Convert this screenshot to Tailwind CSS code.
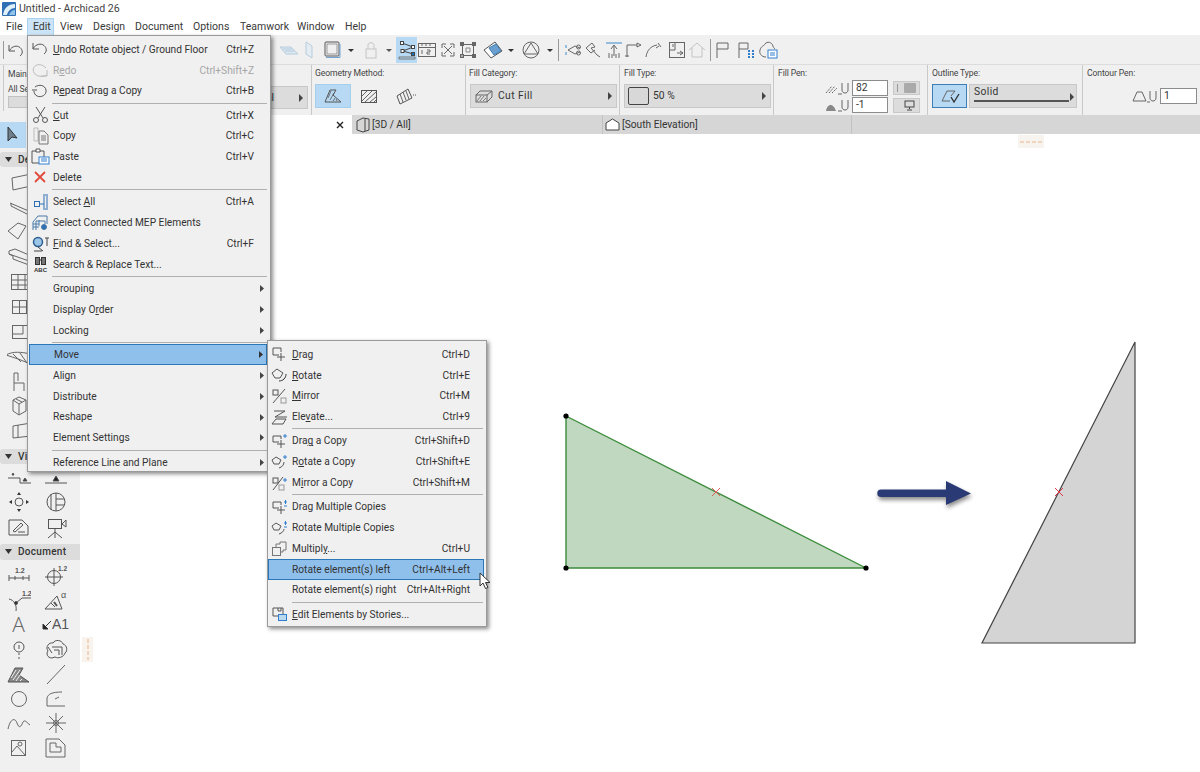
<!DOCTYPE html>
<html lang="en">
<head>
<meta charset="utf-8">
<title>Untitled - Archicad 26</title>
<script src="https://cdn.jsdelivr.net/npm/@tailwindcss/browser@4"></script>
</head>
<body class="bg-white">
<div class="relative w-[1200px] h-[772px] overflow-hidden bg-white flex flex-col font-['Roboto',sans-serif] text-[#3a3a3a] text-[10.300px] whitespace-nowrap">

  <!-- Title bar -->
  <div class="h-[18px] flex items-center shrink-0 pl-[2px]">
    <svg width="14" height="14" viewBox="0 0 14 14"><rect width="14" height="14" rx="1" fill="#2f6fb5"/><path d="M1 13C2 6 6 2 13 2V6C9 6 6 9 5 13Z" fill="#dff0fb"/><path d="M7 13C8 10 10 8 13 8V13Z" fill="#8fc3ea"/></svg>
    <span class="ml-[3px] text-[10.600px] text-[#444]">Untitled - Archicad 26</span>
  </div>

  <!-- Menu bar -->
  <div class="h-[17px] flex items-stretch shrink-0 text-[10.500px] leading-[17px]">
    <span class="w-[27px] pl-[6px]">File</span>
    <span class="w-[27px] pl-[5px] bg-[#cce4f7] border border-[#a8d2f0] border-b-0 leading-[16px]">Edit</span>
    <span class="pl-[6px] w-[33px]">View</span>
    <span class="pl-[6px] w-[42px]">Design</span>
    <span class="pl-[6px] w-[58px]">Document</span>
    <span class="pl-[6px] w-[47px]">Options</span>
    <span class="pl-[6px] w-[57px]">Teamwork</span>
    <span class="pl-[6px] w-[48px]">Window</span>
    <span class="pl-[6px]">Help</span>
  </div>

  <!-- Standard toolbar -->
  <div class="h-[29px] bg-[#f0f0f0] shrink-0 flex items-center">
    <span class="w-px h-[18px] bg-[#999] ml-[3px]"></span>
    <svg class="ml-[3px]" width="18" height="18" viewBox="0 0 18 18" fill="none" stroke="#555"><path d="M2 4V10H8M2.5 9.5C5 5 10 4 13 6.5C16 9 16 13 13 15"/></svg>
    <div class="w-[254px]"></div>
    <svg width="20" height="20" viewBox="0 0 20 20" fill="#dbe7f1" stroke="#b7ccdd"><path d="M1 7H12L19 14H7Z"/><path d="M4 9H13M6 11H15" /></svg>
    <svg width="20" height="20" viewBox="0 0 20 20" fill="#e4edf4" stroke="#b7ccdd"><path d="M7 2L13 6V18L7 14Z"/></svg>
    <svg class="ml-[2px]" width="22" height="22" viewBox="0 0 22 22" fill="none" stroke="#555"><rect x="4" y="3" width="14" height="14" rx="1"/><rect x="6" y="5" width="10" height="10" stroke="#999"/><path d="M5 18.500H19V5" stroke="#6fa6d6"/></svg>
    <svg class="ml-[2px]" width="12" height="12" viewBox="0 0 12 12"><path d="M3 5H9L6 8Z" fill="#333"/></svg>
    <svg class="ml-[4px]" width="20" height="20" viewBox="0 0 20 20" fill="none" stroke="#c4c4c4"><rect x="5" y="9" width="10" height="9"/><path d="M7 9V5C7 2 13 2 13 5V9"/></svg>
    <svg class="ml-[2px]" width="12" height="12" viewBox="0 0 12 12"><path d="M3 5H9L6 8Z" fill="#555"/></svg>
    <div class="ml-px w-[21px] h-[26px] bg-[#b7d9f4] flex items-center justify-center">
      <svg width="20" height="22" viewBox="0 0 20 22" fill="none" stroke="#444"><path d="M5 4L16 8L6 12L16 15"/><rect x="3.500" y="2.500" width="3" height="3" fill="#fff"/><rect x="14.500" y="6.500" width="3" height="3" fill="#fff"/><rect x="4" y="10.500" width="3" height="3" fill="#fff"/><rect x="14.500" y="13.500" width="3" height="3" fill="#1b74c9"/><path d="M2 18H18V20H2Z" stroke="#777"/></svg>
    </div>
    <svg width="20" height="20" viewBox="0 0 20 20" fill="none" stroke="#666"><rect x="1.500" y="3.500" width="17" height="13"/><path d="M1 7.500H18M5 3V6M9 3V6M13 3V6"/><path d="M5 10V14M10 10H13V12H10V14H13"/></svg>
    <svg class="ml-px" width="20" height="20" viewBox="0 0 20 20" fill="none" stroke="#666"><path d="M6 6L14 14M14 6L6 14M4 4H8M4 4V8M16 4H12M16 4V8M4 16H8M4 16V12M16 16H12M16 16V12"/></svg>
    <svg width="20" height="22" viewBox="0 0 20 22" fill="none" stroke="#666"><rect x="4.500" y="5.500" width="11" height="11"/><rect x="2.500" y="3.500" width="3" height="3" fill="#666"/><rect x="14.500" y="3.500" width="3" height="3" fill="#666"/><rect x="2.500" y="15.500" width="3" height="3" fill="#aaa"/><rect x="14.500" y="15.500" width="3" height="3" fill="#666"/><path d="M8 9H12V13H8Z" stroke="#888"/></svg>
    <svg class="ml-[4px]" width="22" height="22" viewBox="0 0 22 22" fill="none" stroke="#555"><path d="M2 11L13 3L20 12L9 19Z" fill="#fff"/><path d="M7 9L14 5L19 12L12 16Z" fill="#6b9fd0" stroke="#3f7cb5"/></svg>
    <svg class="ml-px" width="12" height="12" viewBox="0 0 12 12"><path d="M3 5H9L6 8Z" fill="#333"/></svg>
    <svg class="ml-[4px]" width="20" height="20" viewBox="0 0 20 20" fill="none" stroke="#666"><circle cx="10" cy="10" r="8"/><path d="M10 3L17 14H3Z"/></svg>
    <svg class="ml-[3px]" width="12" height="12" viewBox="0 0 12 12"><path d="M3 5H9L6 8Z" fill="#333"/></svg>
    <span class="ml-[2px] w-px h-[22px] bg-[#999]"></span>
    <svg class="ml-[4px]" width="20" height="20" viewBox="0 0 20 20" fill="none" stroke="#666"><path d="M3 5V8M3 12V15" stroke="#3d88c9"/><path d="M5 10L12 6L17 8M5 10L12 14L17 12"/><circle cx="15.500" cy="7" r="2"/><circle cx="15.500" cy="13" r="2"/></svg>
    <svg width="20" height="20" viewBox="0 0 20 20" fill="none" stroke="#666"><path d="M3 8L9 3L12 7L8 8L14 15L17 17M3 8L8 13L12 10"/></svg>
    <svg class="ml-px" width="20" height="20" viewBox="0 0 20 20" fill="none" stroke="#666"><path d="M2 3H18" stroke="#3d88c9"/><path d="M10 16V6M7 9L10 5L13 9M5 13V18M8 14V18M12 14V18M15 13V18"/></svg>
    <svg class="-ml-px" width="20" height="20" viewBox="0 0 20 20" fill="none" stroke="#666"><path d="M4 17V5H14M14 3V7L18 5Z"/><path d="M2 16H6" /></svg>
    <svg width="20" height="20" viewBox="0 0 20 20" fill="none" stroke="#666"><path d="M3 17C4 10 8 6 14 5M15 3L18 7M13 8L16 6"/></svg>
    <svg class="ml-[4px]" width="20" height="20" viewBox="0 0 20 20" fill="none" stroke="#666"><rect x="2.500" y="2.500" width="15" height="15"/><path d="M2 10H8V3M6 7L6 4M10 13H16M13 11L16 13L13 15"/></svg>
    <svg width="20" height="20" viewBox="0 0 20 20" fill="none" stroke="#c4c4c4"><path d="M2 10L10 3L18 10M5 8V17H15V8"/></svg>
    <span class="ml-[3px] w-px h-[22px] bg-[#999]"></span>
    <svg class="ml-[2px]" width="20" height="20" viewBox="0 0 20 20" fill="none" stroke="#666"><path d="M4 18V3H15V9H4"/></svg>
    <svg class="ml-[3px]" width="20" height="20" viewBox="0 0 20 20" fill="none" stroke="#666"><path d="M3 18V3H12V9H3"/><path d="M12 11H14M16 11H18M12 14H14M16 14H18M12 17H14M16 17H18" stroke="#2f7fd0" stroke-width="2"/></svg>
    <svg class="ml-[2px]" width="20" height="20" viewBox="0 0 20 20" fill="none" stroke="#666"><path d="M8 17C3 17 1 13 2 10C3 6 6 6 7 4C9 1 14 2 15 6C15 7 16 8 17 9"/><rect x="10" y="10" width="9" height="8" fill="#fff" stroke="#2f7fd0"/><path d="M12 13H17M12 15H17" stroke="#2f7fd0"/></svg>
  </div>

  <!-- Info box -->
  <div class="h-[51px] bg-[#f0f0f0] border-t border-[#dcdcdc] shrink-0 flex text-[8.600px] tracking-[-0.1px] text-[#444]">
    <div class="w-[312px] shrink-0 border-r border-[#c9c9c9] flex">
      <div class="w-[4px] border-r border-[#c9c9c9] mb-1"></div>
      <div class="w-[60px] pl-[4px] pt-[2px]">
        <div class="leading-[12px] mt-[1px]">Main:</div>
        <div class="leading-[12px] mt-[3px]">All Sel</div>
        <div class="w-[22px] h-[12px] mt-[1px] bg-[#dcdcdc] border border-[#c2c2c2]"></div>
      </div>
      <div class="flex-1 flex items-end pb-[6px] pr-[3px]">
        <div class="w-full h-[23px] bg-[#dcdcdc] border border-[#c8c8c8] flex items-center justify-end pr-[3px] gap-[24px] text-[10.300px] tracking-normal text-[#333]">
          <span>al</span>
          <svg width="6" height="8" viewBox="0 0 6 8"><path d="M1 0L5 4L1 8Z" fill="#444"/></svg>
        </div>
      </div>
    </div>

    <div class="w-[154px] shrink-0 border-r border-[#c9c9c9] pl-[3px] pt-[2px]">
      <div class="leading-[12px]">Geometry Method:</div>
      <div class="flex items-center mt-[5px]">
        <div class="w-[36px] h-[24px] bg-[#b7d9f4] border border-[#a5cdec] flex items-center justify-center">
          <svg width="18" height="14" viewBox="0 0 18 14" fill="none" stroke="#555"><path d="M1 13L6 1H12L9 6L17 13Z"/><path d="M4 9L7 2M6 11L10 4M9 12L11 9M13 12L12 10" stroke-width=".8"/></svg>
        </div>
        <svg class="ml-[10px]" width="16" height="13" viewBox="0 0 16 13" fill="none" stroke="#555"><rect x=".5" y=".5" width="15" height="12"/><path d="M1 6L6 1M1 11L11 1M4 12L15 2M9 12L15 7M13 12L15 10" stroke-width=".9"/></svg>
        <svg class="ml-[18px]" width="22" height="18" viewBox="0 0 22 18" fill="none" stroke="#555"><path d="M2 9L13 2L17 11L5 17Z"/><path d="M5 7L8 15M8 5L11 13M11 4L14 12" stroke-width=".9"/><path d="M18 8H21" stroke-dasharray="1 1"/></svg>
      </div>
    </div>

    <div class="w-[154px] shrink-0 border-r border-[#c9c9c9] pl-[3px] pt-[2px]">
      <div class="leading-[12px]">Fill Category:</div>
      <div class="ml-[1px] mt-[5px] w-[147px] h-[24px] bg-[#dcdcdc] border border-[#c8c8c8] flex items-center pl-[4px] pr-[3px] text-[10.300px] tracking-[0.4px] text-[#333]">
        <svg width="18" height="14" viewBox="0 0 18 14" fill="none" stroke="#666"><rect x="1" y="6" width="11" height="7"/><path d="M1 6L5 2H17L12 6M17 2V8L12 13"/><path d="M2 12L6 7M5 12L9 7M8 12L11 9" stroke-width=".8"/></svg>
        <span class="ml-[5px] flex-1">Cut Fill</span>
        <svg width="6" height="8" viewBox="0 0 6 8"><path d="M1 0L5 4L1 8Z" fill="#444"/></svg>
      </div>
    </div>

    <div class="w-[154px] shrink-0 border-r border-[#c9c9c9] pl-[4px] pt-[2px]">
      <div class="leading-[12px]">Fill Type:</div>
      <div class="mt-[5px] w-[147px] h-[24px] bg-[#dcdcdc] border border-[#c8c8c8] flex items-center pl-[3px] pr-[3px] text-[10.300px] tracking-normal text-[#333]">
        <span class="w-[21px] h-[18px] bg-[#d8d8d8] border border-[#444] rounded-[2px]"></span>
        <span class="ml-[4px] flex-1">50 %</span>
        <svg width="6" height="8" viewBox="0 0 6 8"><path d="M1 0L5 4L1 8Z" fill="#444"/></svg>
      </div>
    </div>

    <div class="w-[154px] shrink-0 border-r border-[#c9c9c9] pl-[4px] pt-[2px] relative">
      <div class="leading-[12px]">Fill Pen:</div>
      <div class="absolute right-[7px] top-[15px] flex flex-col gap-px tracking-normal text-[10.300px] text-[#333]">
        <div class="flex items-center">
          <svg width="24" height="16" viewBox="0 0 24 16" fill="none" stroke="#666"><path d="M1 13L7 6M4 13L10 6M7 13L12 8" stroke-dasharray="2 1"/><path d="M17 3V10C17 14 23 14 23 10V3M13 14H17"/></svg>
          <div class="ml-[3px] w-[36px] h-[16px] bg-white border border-[#8c8c8c] leading-[14px] pl-[3px]">82</div>
          <div class="ml-[5px] w-[27px] h-[14px] bg-[#dcdcdc] border border-[#c8c8c8] flex items-center px-[3px] justify-between"><span class="w-px h-[8px] bg-[#999]"></span><span class="w-[12px] h-[10px] bg-[#aaa] rounded-[1px]"></span></div>
        </div>
        <div class="flex items-center">
          <svg width="24" height="16" viewBox="0 0 24 16" fill="none" stroke="#666"><path d="M1 14C2 7 8 5 11 14Z" fill="#888" stroke="none"/><path d="M17 3V10C17 14 23 14 23 10V3M13 14H17"/></svg>
          <div class="ml-[3px] w-[36px] h-[16px] bg-white border border-[#8c8c8c] leading-[14px] pl-[3px]">-1</div>
          <div class="ml-[5px] w-[27px] h-[15px] bg-[#dcdcdc] border border-[#c8c8c8] flex items-center justify-end pr-[4px]"><svg width="11" height="11" viewBox="0 0 11 11" fill="none" stroke="#444"><rect x="1" y="1" width="9" height="6"/><path d="M5.500 7V9M3 10H8"/></svg></div>
        </div>
      </div>
    </div>

    <div class="w-[155px] shrink-0 border-r border-[#c9c9c9] pl-[4px] pt-[2px]">
      <div class="leading-[12px]">Outline Type:</div>
      <div class="flex mt-[5px]">
        <div class="w-[35px] h-[24px] bg-[#b7d9f4] border border-[#3d7fb5] flex items-center justify-center">
          <svg width="20" height="16" viewBox="0 0 20 16" fill="none" stroke="#666"><path d="M2 13L7 3H15L11 8M2 13H10"/><path d="M11 9L14 14L19 6" stroke="#333" stroke-width="1.400"/></svg>
        </div>
        <div class="ml-[2px] w-[108px] h-[24px] bg-[#dcdcdc] border border-[#c8c8c8] relative pl-[4px] text-[10.300px] tracking-[0.4px] leading-[14px] text-[#333]">
          Solid
          <span class="absolute left-[4px] right-[7px] top-[15px] h-[2px] bg-[#555]"></span>
          <svg class="absolute right-[1px] top-[8px]" width="6" height="8" viewBox="0 0 6 8"><path d="M1 0L5 4L1 8Z" fill="#444"/></svg>
        </div>
      </div>
    </div>

    <div class="flex-1 pl-[4px] pt-[2px] relative">
      <div class="leading-[12px]">Contour Pen:</div>
      <div class="absolute right-[3px] top-[23px] flex items-center tracking-normal text-[10.300px] text-[#333]">
        <svg width="26" height="16" viewBox="0 0 26 16" fill="none" stroke="#666"><path d="M1 13L5 4H10L14 13Z"/><path d="M18 3V10C18 14 24 14 24 10V3M15 14H18"/></svg>
        <div class="ml-[2px] w-[37px] h-[16px] bg-white border border-[#8c8c8c] leading-[14px] pl-[3px]">1</div>
      </div>
    </div>
  </div>

  <!-- Lower area -->
  <div class="flex-1 flex min-h-0">
    <!-- Toolbox -->
    <div class="w-[80px] shrink-0 bg-[#f0f0f0] flex flex-col">
      <div class="mt-[7px] w-[26px] h-[26px] bg-[#b7d9f4] flex items-center justify-center">
        <svg width="16" height="18" viewBox="0 0 16 18"><path d="M3 1V15L7 11L12 12Z" fill="#6f7f8c" stroke="#333"/></svg>
      </div>
      <div class="mt-[4px] h-[15px] bg-[#dcdcdc] rounded-l-[3px] flex items-center pl-[5px] text-[10px] font-medium text-[#333] tracking-[0.3px]">
        <svg width="7" height="5" viewBox="0 0 7 5"><path d="M0 0H7L3.500 5Z" fill="#333"/></svg><span class="ml-[6px]">Design</span>
      </div>
      <div class="grid grid-cols-[37px_37px] auto-rows-[24.900px] mt-[3px]">
        <div class="flex items-center justify-center"><svg width="24" height="24" fill="none" stroke="#666"><path d="M5 8L24 4V16L6 20Z"/></svg></div><div></div>
        <div class="flex items-center justify-center"><svg width="24" height="24" fill="none" stroke="#666"><path d="M3 8L24 17M4 11L4 8M4 11L24 21"/></svg></div><div></div>
        <div class="flex items-center justify-center"><svg width="24" height="24" fill="none" stroke="#666"><path d="M1 11L11 3L19 6L11 19Z"/></svg></div><div></div>
        <div class="flex items-center justify-center"><svg width="24" height="24" fill="none" stroke="#666"><path d="M2 6L8 4L22 10M2 6V9L22 16M6 11V14L22 20M2 9L6 11"/></svg></div><div></div>
        <div class="flex items-center justify-center"><svg width="24" height="24" fill="none" stroke="#666"><rect x="4.500" y="4.500" width="20" height="15"/><path d="M4 10H24M4 15H24M11 4V20M18 4V20"/></svg></div><div></div>
        <div class="flex items-center justify-center"><svg width="24" height="24" fill="none" stroke="#666"><rect x="5.500" y="5.500" width="14" height="13"/><path d="M12.500 5V19M5 12H20"/></svg></div><div></div>
        <div class="flex items-center justify-center"><svg width="24" height="24" fill="none" stroke="#666"><rect x="5.500" y="5.500" width="15" height="13"/><path d="M16 5V14H5"/></svg></div><div></div>
        <div class="flex items-center justify-center"><svg width="24" height="24" fill="none" stroke="#666"><path d="M-1 10C6 6 14 7 24 9L27 14L24 20C16 15 8 13 -1 10ZM6 9L14 17M13 8L20 18"/></svg></div><div></div>
        <div class="flex items-center justify-center"><svg width="24" height="24" fill="none" stroke="#666"><path d="M7 3V13H17V21M7 13V21M7 3H11V11M11 13"/></svg></div><div></div>
        <div class="flex items-center justify-center"><svg width="24" height="24" fill="none" stroke="#666"><path d="M12 3L19 6V17L12 21L6 17V6ZM6 6L12 10L19 6M12 10V21M9 5L15 8"/></svg></div><div></div>
        <div class="flex items-center justify-center"><svg width="24" height="24" fill="none" stroke="#666"><path d="M6 7L24 4V17L6 19ZM11 6V18"/></svg></div><div></div>
      </div>
      <div class="mt-[5px] h-[15px] bg-[#dcdcdc] rounded-l-[3px] flex items-center pl-[5px] text-[10px] font-medium text-[#333] tracking-[0.3px] overflow-hidden">
        <svg width="7" height="5" viewBox="0 0 7 5"><path d="M0 0H7L3.500 5Z" fill="#333"/></svg><span class="ml-[6px]">Vi</span>
      </div>
      <div class="grid grid-cols-[37px_37px] auto-rows-[24.700px] mt-px">
        <div class="flex items-center justify-center"><svg width="24" height="24" fill="none" stroke="#555"><path d="M1 13H13V18H24"/><path d="M7 10H5L6 8ZM16 16H20L18 13Z" fill="#333"/></svg></div>
        <div class="flex items-center justify-center"><svg width="24" height="24" fill="none" stroke="#555"><path d="M1 18H23"/><path d="M9 16H15L12 11Z" fill="#222"/></svg></div>
        <div class="flex items-center justify-center"><svg width="24" height="24" fill="none" stroke="#555"><circle cx="12" cy="12" r="4"/><path d="M10 5H14L12 2ZM10 19H14L12 22ZM5 10V14L2 12ZM19 10V14L22 12Z" fill="#333" stroke="none"/></svg></div>
        <div class="flex items-center justify-center"><svg width="24" height="24" fill="none" stroke="#555"><circle cx="12" cy="12" r="9"/><path d="M7 4V20M12 3V21M12 9H20M12 15H20"/></svg></div>
        <div class="flex items-center justify-center"><svg width="24" height="24" fill="none" stroke="#555"><path d="M2 5H15L21 11V20H2Z"/><path d="M6 16L14 8L16 10L8 17ZM11 17H18"/></svg></div>
        <div class="flex items-center justify-center"><svg width="24" height="24" fill="none" stroke="#555"><rect x="4.500" y="4.500" width="13" height="9"/><path d="M18 9L22 5V12ZM11 14V17M11 17L4 23M11 17L18 23M11 17V23"/></svg></div>
      </div>
      <div class="mt-[5px] h-[16px] bg-[#dcdcdc] rounded-l-[3px] flex items-center pl-[5px] text-[10px] font-medium text-[#333] tracking-[0.3px]">
        <svg width="7" height="5" viewBox="0 0 7 5"><path d="M0 0H7L3.500 5Z" fill="#333"/></svg><span class="ml-[6px]">Document</span>
      </div>
      <div class="grid grid-cols-[37px_37px] auto-rows-[24.700px] mt-[3px]">
        <div class="flex items-center justify-center"><svg width="24" height="24" fill="none" stroke="#555" viewBox="0 0 24 24"><path d="M2 15H22M2 12V18M8 13V17M16 13V17M22 12V18"/><text x="8" y="10" font-size="7" font-weight="700" fill="#555" stroke="none" font-family="Liberation Sans">1.2</text></svg></div>
        <div class="flex items-center justify-center"><svg width="24" height="24" fill="none" stroke="#555"><circle cx="10" cy="14" r="6.500"/><path d="M10 5V23M1 14H19"/><text x="14" y="8" font-size="6.500" font-weight="700" fill="#555" stroke="none" font-family="Liberation Sans">1.2</text></svg></div>
        <div class="flex items-center justify-center"><svg width="24" height="24" fill="none" stroke="#555"><path d="M2 11C7 12 10 17 9 23M9 15L15 10H24"/><circle cx="9" cy="15" r="1.500" fill="#222"/><text x="15" y="8" font-size="7" font-weight="700" fill="#555" stroke="none" font-family="Liberation Sans">1.2</text></svg></div>
        <div class="flex items-center justify-center"><svg width="26" height="24" fill="none" stroke="#555"><path d="M2 21H19L14 8ZM8 15L12 19"/><path d="M11 14L14 18" stroke-width="2"/><text x="18" y="10" font-size="9" fill="#555" stroke="none" font-family="Liberation Sans">α</text></svg></div>
        <div class="flex items-center justify-center text-[21px] leading-none font-light text-[#666] font-['Open_Sans',sans-serif]">A</div>
        <div class="flex items-center justify-center text-[14px] text-[#555] font-['Liberation_Sans',sans-serif]"><svg width="10" height="10" fill="none" stroke="#333"><path d="M9 1L2 8"/><path d="M1 9V4L6 9Z" fill="#222"/></svg><span>A1</span></div>
        <div class="flex items-center justify-center"><svg width="24" height="24" fill="none" stroke="#555"><circle cx="12" cy="10" r="5"/><path d="M12 8V12"/><path d="M12 16V23" stroke-dasharray="2 2"/></svg></div>
        <div class="flex items-center justify-center"><svg width="24" height="24" fill="none" stroke="#555"><path d="M8 21C3 21 2 16 4 14C1 10 5 5 9 6C11 2 18 3 19 7C23 8 24 14 21 16C20 20 14 22 11 20Z"/><path d="M8 10H18V18M10 13H15V18M4 10L8 16" /></svg></div>
        <div class="flex items-center justify-center"><svg width="24" height="24" fill="none" stroke="#555"><path d="M1 20L8 6H16L12 13L22 20Z" fill="#888"/><path d="M4 16L9 8M6 18L13 8M9 19L13 13M13 19L15 17" stroke="#f0f0f0"/></svg></div>
        <div class="flex items-center justify-center"><svg width="24" height="24" fill="none" stroke="#666"><path d="M3 22L21 3"/></svg></div>
        <div class="flex items-center justify-center"><svg width="24" height="24" fill="none" stroke="#666"><circle cx="12" cy="12" r="7.500"/></svg></div>
        <div class="flex items-center justify-center"><svg width="24" height="24" fill="none" stroke="#666"><path d="M3 19V11C4 7 8 5 18 5M15 10L11 12M3 19H21"/></svg></div>
        <div class="flex items-center justify-center"><svg width="24" height="24" fill="none" stroke="#666"><path d="M1 18C3 8 8 6 10 12C12 18 14 16 16 11C18 8 20 12 23 14"/></svg></div>
        <div class="flex items-center justify-center"><svg width="24" height="24" fill="none" stroke="#666"><circle cx="12" cy="12" r="2.500"/><path d="M12 2V22M2 12H22M5 5L19 19M19 5L5 19"/></svg></div>
        <div class="flex items-center justify-center"><svg width="24" height="24" fill="none" stroke="#666"><rect x="4.500" y="4.500" width="14" height="15"/><circle cx="13" cy="8" r="2"/><path d="M5 16L10 10L18 19"/></svg></div>
        <div class="flex items-center justify-center"><svg width="24" height="24" fill="none" stroke="#666"><path d="M2 3H15L21 9V21H2Z"/><path d="M6 7H12V11H17V16H6Z"/></svg></div>
      </div>
    </div>

    <!-- Work area -->
    <div class="flex-1 flex flex-col min-w-0 relative">
      <div class="h-[19px] flex shrink-0 text-[10.200px] text-[#333]">
        <div class="w-[272px] bg-white flex items-center justify-end pr-[8px]">
          <svg width="8" height="8" viewBox="0 0 8 8" stroke="#222" stroke-width="1.400"><path d="M1 1L7 7M7 1L1 7"/></svg>
        </div>
        <div class="w-[250px] bg-[#d6d6d6] flex items-center pl-[4px]">
          <svg width="14" height="16" viewBox="0 0 14 16" fill="none" stroke="#444"><path d="M1 4L7 1L13 2V13L7 15L1 13Z"/><path d="M9 2V14"/></svg>
          <span class="ml-[2px]">[3D / All]</span>
        </div>
        <div class="w-[249px] bg-[#d6d6d6] border-l border-[#c2c2c2] flex items-center pl-[2px]">
          <svg width="15" height="14" viewBox="0 0 15 14" fill="#fff" stroke="#444"><path d="M1 5L7.500 1L14 5V12H1Z"/></svg>
          <span class="ml-[2px]">[South Elevation]</span>
        </div>
        <div class="flex-1 bg-[#d6d6d6] border-l border-[#c2c2c2]"></div>
      </div>
      <div class="flex-1 relative bg-white">
        <!-- Free canvas: coordinates are the drawing itself -->
        <svg class="absolute left-0 top-0" width="1120" height="638" viewBox="80 134 1120 638">
          <rect x="1018" y="135" width="26" height="13" fill="#f7f3ee"/>
          <path d="M1020 142H1042" stroke="#e8b48c" stroke-width="1" stroke-dasharray="4 2"/>
          <rect x="82" y="637" width="11" height="25" fill="#f8f3ec"/>
          <path d="M88 639V660" stroke="#e8b48c" stroke-width="1" stroke-dasharray="4 2"/>
          <path d="M566 416L866 568H566Z" fill="#bfd8bf" stroke="#3b8b3b" stroke-width="1.400"/>
          <circle cx="566" cy="416" r="2.600" fill="#000"/>
          <circle cx="566" cy="568" r="2.600" fill="#000"/>
          <circle cx="866" cy="568" r="2.600" fill="#000"/>
          <path d="M712 488L720 496M720 488L712 496" stroke="#d9605a"/>
          <path class="drop-shadow-[1px_3px_2px_rgba(0,0,0,0.45)]" d="M881 489.500H946V481L971 493.500L946 505V497H881A3.700 3.700 0 0 1 881 489.500Z" fill="#2a3a74"/>
          <path d="M1135 342V643H982Z" fill="#d4d4d4" stroke="#444" stroke-width="1.200"/>
          <path d="M1055 488L1063 496M1063 488L1055 496" stroke="#d8384a"/>
        </svg>
      </div>
    </div>
  </div>

  <!-- Edit menu -->
  <div class="absolute left-[27px] top-[35px] w-[244px] h-[437px] bg-[#f0f0f0] border border-[#9a9a9a] shadow-[2px_2px_4px_rgba(0,0,0,0.45)] text-[10.200px] text-[#333] pt-[3px]">
    <div class="h-[20.800px] flex items-center pr-[16px]"><svg class="ml-[2px] w-[21px] shrink-0" width="21" height="18" viewBox="0 0 21 18" fill="none" stroke="#555"><path d="M3 3V9H9M3 8.500C6 4 11 3 14 5.500C17 8 17 12 14 14"/></svg><span class="ml-[2px] flex-1"><u>U</u>ndo Rotate object / Ground Floor</span><span>Ctrl+Z</span></div>
    <div class="h-[20.800px] flex items-center pr-[16px] text-[#a6a6a6]"><svg class="ml-[2px] w-[21px] shrink-0" width="21" height="18" viewBox="0 0 21 18" fill="none" stroke="#bbb"><path d="M17 9V15H11M17 14C14 16 8 16 5 13C2 10 3 5 7 4C10 3 13 4 16 7"/></svg><span class="ml-[2px] flex-1">R<u>e</u>do</span><span>Ctrl+Shift+Z</span></div>
    <div class="h-[20.800px] flex items-center pr-[16px]"><svg class="ml-[2px] w-[21px] shrink-0" width="21" height="18" viewBox="0 0 21 18" fill="none" stroke="#555"><path d="M5 5C9 2 15 3 16 8C17 13 11 16 7 14C5 13 4 11 4 9M2 8H7"/></svg><span class="ml-[2px] flex-1">R<u>e</u>peat Drag a Copy</span><span>Ctrl+B</span></div>
    <div class="h-[3.560px] flex items-center pl-[24px] pr-[3px]"><span class="w-full h-px bg-[#b0b0b0]"></span></div>
    <div class="h-[20.800px] flex items-center pr-[16px]"><svg class="ml-[2px] w-[21px] shrink-0" width="21" height="18" viewBox="0 0 21 18" fill="none" stroke="#555"><path d="M6 1L13 12M15 1L8 12"/><circle cx="6" cy="14" r="2.500"/><circle cx="15" cy="14" r="2.500"/></svg><span class="ml-[2px] flex-1"><u>C</u>ut</span><span>Ctrl+X</span></div>
    <div class="h-[20.800px] flex items-center pr-[16px]"><svg class="ml-[2px] w-[21px] shrink-0" width="21" height="18" viewBox="0 0 21 18" fill="none" stroke="#777"><path d="M4 1H8V14H4Z" stroke="#bbb"/><path d="M9 4H14L18 8V17H9Z" fill="#f0f0f0"/><path d="M11 9H16M11 11H16M11 13H16"/></svg><span class="ml-[2px] flex-1">Copy</span><span>Ctrl+C</span></div>
    <div class="h-[20.800px] flex items-center pr-[16px]"><svg class="ml-[2px] w-[21px] shrink-0" width="21" height="18" viewBox="0 0 21 18" fill="none" stroke="#555"><path d="M2 3H14V15H2Z"/><path d="M6 1H10V4H6Z" fill="#fff"/><rect x="9" y="9" width="10" height="7" fill="#fff" stroke="#2f7fd0"/><path d="M11 11H17M11 13H17" stroke="#2f7fd0"/></svg><span class="ml-[2px] flex-1">Paste</span><span>Ctrl+V</span></div>
    <div class="h-[20.800px] flex items-center pr-[16px]"><svg class="ml-[2px] w-[21px] shrink-0" width="21" height="18" viewBox="0 0 21 18" fill="none" stroke="#e0493c" stroke-width="1.800"><path d="M5 3L15 13M15 3L5 13"/></svg><span class="ml-[2px] flex-1">Delete</span></div>
    <div class="h-[3.560px] flex items-center pl-[24px] pr-[3px]"><span class="w-full h-px bg-[#b0b0b0]"></span></div>
    <div class="h-[20.800px] flex items-center pr-[16px]"><svg class="ml-[2px] w-[21px] shrink-0" width="21" height="18" viewBox="0 0 21 18" fill="none" stroke="#2d6fb3"><rect x="4.500" y="8.500" width="5" height="5"/><path d="M13 2H18M13 16H18M14 3V15M17 3V15M9 11H14" /></svg><span class="ml-[2px] flex-1">Select <u>A</u>ll</span><span>Ctrl+A</span></div>
    <div class="h-[20.800px] flex items-center pr-[16px]"><svg class="ml-[2px] w-[21px] shrink-0" width="21" height="18" viewBox="0 0 21 18" fill="none" stroke="#4a7ba8"><path d="M3 16V8L8 2H17V10M6 7H15V10M3 10H9M3 13H9M6 7V16M9 6V12"/><circle cx="14" cy="13" r="2.500" fill="#2d6fb3"/></svg><span class="ml-[2px] flex-1">Select Connected MEP Elements</span></div>
    <div class="h-[20.800px] flex items-center pr-[16px]"><svg class="ml-[2px] w-[21px] shrink-0" width="21" height="18" viewBox="0 0 21 18" fill="none" stroke="#444"><circle cx="8" cy="7" r="4.500" fill="#9cc6e8" stroke="#2d5f90" stroke-width="1.500"/><path d="M8 12L13 16M4 16H12" /><path d="M15 3H19M17 3V11"/></svg><span class="ml-[2px] flex-1"><u>F</u>ind &amp; Select...</span><span>Ctrl+F</span></div>
    <div class="h-[20.800px] flex items-center pr-[16px]"><svg class="ml-[2px] w-[21px] shrink-0" width="21" height="19" viewBox="0 0 21 19" fill="#777" stroke="#333"><rect x="5.500" y="2.500" width="4" height="7"/><rect x="11.500" y="2.500" width="4" height="7"/><path d="M9 5H12"/><text x="4" y="17" font-size="6" font-weight="700" stroke="none" fill="#333" font-family="Liberation Sans">ABC</text></svg><span class="ml-[2px] flex-1">Search &amp; Replace Text...</span></div>
    <div class="h-[3.560px] flex items-center pl-[24px] pr-[3px]"><span class="w-full h-px bg-[#b0b0b0]"></span></div>
    <div class="h-[20.800px] flex items-center pl-[25px] pr-[6px]"><span class="flex-1">Grouping</span><svg width="4" height="7" viewBox="0 0 4 7"><path d="M0 0L4 3.500L0 7Z" fill="#444"/></svg></div>
    <div class="h-[20.800px] flex items-center pl-[25px] pr-[6px]"><span class="flex-1">Display O<u>r</u>der</span><svg width="4" height="7" viewBox="0 0 4 7"><path d="M0 0L4 3.500L0 7Z" fill="#444"/></svg></div>
    <div class="h-[20.800px] flex items-center pl-[25px] pr-[6px]"><span class="flex-1">Locking</span><svg width="4" height="7" viewBox="0 0 4 7"><path d="M0 0L4 3.500L0 7Z" fill="#444"/></svg></div>
    <div class="h-[3.560px] flex items-center pl-[24px] pr-[3px]"><span class="w-full h-px bg-[#b0b0b0]"></span></div>
    <div class="h-[20.800px] flex items-center ml-px mr-[3px] pl-[24px] pr-[3px] bg-[#8fc0ec] border border-[#2a78b8]"><span class="flex-1">Move</span><svg width="4" height="7" viewBox="0 0 4 7"><path d="M0 0L4 3.500L0 7Z" fill="#333"/></svg></div>
    <div class="h-[20.800px] flex items-center pl-[25px] pr-[6px]"><span class="flex-1">Align</span><svg width="4" height="7" viewBox="0 0 4 7"><path d="M0 0L4 3.500L0 7Z" fill="#444"/></svg></div>
    <div class="h-[20.800px] flex items-center pl-[25px] pr-[6px]"><span class="flex-1">Distribute</span><svg width="4" height="7" viewBox="0 0 4 7"><path d="M0 0L4 3.500L0 7Z" fill="#444"/></svg></div>
    <div class="h-[20.800px] flex items-center pl-[25px] pr-[6px]"><span class="flex-1">Reshape</span><svg width="4" height="7" viewBox="0 0 4 7"><path d="M0 0L4 3.500L0 7Z" fill="#444"/></svg></div>
    <div class="h-[20.800px] flex items-center pl-[25px] pr-[6px]"><span class="flex-1">Element Settings</span><svg width="4" height="7" viewBox="0 0 4 7"><path d="M0 0L4 3.500L0 7Z" fill="#444"/></svg></div>
    <div class="h-[3.560px] flex items-center pl-[24px] pr-[3px]"><span class="w-full h-px bg-[#b0b0b0]"></span></div>
    <div class="h-[20.800px] flex items-center pl-[25px] pr-[6px]"><span class="flex-1">Reference Line and Plane</span><svg width="4" height="7" viewBox="0 0 4 7"><path d="M0 0L4 3.500L0 7Z" fill="#444"/></svg></div>
  </div>

  <!-- Move submenu -->
  <div class="absolute left-[267px] top-[340px] w-[220px] h-[287px] bg-[#f0f0f0] border border-[#9a9a9a] shadow-[2px_2px_4px_rgba(0,0,0,0.45)] text-[10.200px] text-[#333] pt-[3px]">
    <div class="h-[20.800px] flex items-center pr-[16px]"><svg class="ml-[3px] w-[17px] shrink-0" width="17" height="16" viewBox="0 0 17 16" fill="none" stroke="#555"><path d="M8 9H2V2H10V6"/><path d="M10 7V15M6 11H14"/></svg><span class="ml-[4px] flex-1"><u>D</u>rag</span><span>Ctrl+D</span></div>
    <div class="h-[20.800px] flex items-center pr-[16px]"><svg class="ml-[3px] w-[17px] shrink-0" width="17" height="16" viewBox="0 0 17 16" fill="none" stroke="#555"><path d="M1 6L6 2L12 6L9 11L4 11Z"/><path d="M15 7C15 11 12 14 8 14" stroke="#333"/></svg><span class="ml-[4px] flex-1"><u>R</u>otate</span><span>Ctrl+E</span></div>
    <div class="h-[20.800px] flex items-center pr-[16px]"><svg class="ml-[3px] w-[17px] shrink-0" width="17" height="16" viewBox="0 0 17 16" fill="none" stroke="#555"><path d="M2 15L14 1"/><rect x="2" y="2" width="5" height="5"/><rect x="10" y="10" width="5" height="5" stroke="#999"/></svg><span class="ml-[4px] flex-1"><u>M</u>irror</span><span>Ctrl+M</span></div>
    <div class="h-[20.800px] flex items-center pr-[16px]"><svg class="ml-[3px] w-[17px] shrink-0" width="17" height="16" viewBox="0 0 17 16" fill="none" stroke="#555"><path d="M3 2H14L4 8H16M1 15L5 10H15L12 15Z"/></svg><span class="ml-[4px] flex-1">Ele<u>v</u>ate...</span><span>Ctrl+9</span></div>
    <div class="h-[3.470px] flex items-center pl-[24px] pr-[3px]"><span class="w-full h-px bg-[#b0b0b0]"></span></div>
    <div class="h-[20.800px] flex items-center pr-[16px]"><svg class="ml-[3px] w-[17px] shrink-0" width="17" height="16" viewBox="0 0 17 16" fill="none" stroke="#555"><path d="M8 9H2V3H10V6"/><path d="M10 7V15M6 11H14"/><path d="M12 3H16M14 1V5" stroke="#2f7fd0"/></svg><span class="ml-[4px] flex-1">Dra<u>g</u> a Copy</span><span>Ctrl+Shift+D</span></div>
    <div class="h-[20.800px] flex items-center pr-[16px]"><svg class="ml-[3px] w-[17px] shrink-0" width="17" height="16" viewBox="0 0 17 16" fill="none" stroke="#555"><path d="M1 6L5 3L10 6L8 10L3 10Z"/><path d="M13 8C13 11 11 13 8 14"/><path d="M12 3H16M14 1V5" stroke="#2f7fd0"/></svg><span class="ml-[4px] flex-1">R<u>o</u>tate a Copy</span><span>Ctrl+Shift+E</span></div>
    <div class="h-[20.800px] flex items-center pr-[16px]"><svg class="ml-[3px] w-[17px] shrink-0" width="17" height="16" viewBox="0 0 17 16" fill="none" stroke="#555"><path d="M2 15L12 2"/><rect x="2" y="3" width="5" height="5"/><rect x="8" y="10" width="5" height="5" stroke="#999"/><path d="M12 5H16M14 3V7" stroke="#2f7fd0"/></svg><span class="ml-[4px] flex-1">M<u>i</u>rror a Copy</span><span>Ctrl+Shift+M</span></div>
    <div class="h-[3.470px] flex items-center pl-[24px] pr-[3px]"><span class="w-full h-px bg-[#b0b0b0]"></span></div>
    <div class="h-[20.800px] flex items-center pr-[16px]"><svg class="ml-[3px] w-[17px] shrink-0" width="17" height="16" viewBox="0 0 17 16" fill="none" stroke="#555"><path d="M8 9H2V3H10V6"/><path d="M10 7V15M6 11H14"/><path d="M13 3H16M14.500 1V5M13 7H16" stroke="#2f7fd0"/></svg><span class="ml-[4px] flex-1">Drag Multiple Copies</span></div>
    <div class="h-[20.800px] flex items-center pr-[16px]"><svg class="ml-[3px] w-[17px] shrink-0" width="17" height="16" viewBox="0 0 17 16" fill="none" stroke="#555"><path d="M1 6L5 3L10 6L8 10L3 10Z"/><path d="M13 9C13 11 11 13 8 14"/><path d="M13 3H16M14.500 1V5M13 7H16" stroke="#2f7fd0"/></svg><span class="ml-[4px] flex-1">Rotate Multiple Copies</span></div>
    <div class="h-[20.800px] flex items-center pr-[16px]"><svg class="ml-[3px] w-[17px] shrink-0" width="17" height="16" viewBox="0 0 17 16" fill="none" stroke="#777"><rect x="1.500" y="6.500" width="8" height="8"/><path d="M5 6V3H9V1H15V9H12V11H10"/></svg><span class="ml-[4px] flex-1">Multipl<u>y</u>...</span><span>Ctrl+U</span></div>
    <div class="h-[20.800px] flex items-center mr-[2px] pr-[13px] bg-[#8fc0ec] border border-[#2a78b8]"><span class="w-[23px] shrink-0"></span><span class="flex-1">Rotate element(s) left</span><span>Ctrl+Alt+Left</span></div>
    <div class="h-[20.800px] flex items-center pr-[16px]"><span class="w-[24px] shrink-0"></span><span class="flex-1">Rotate element(s) right</span><span>Ctrl+Alt+Right</span></div>
    <div class="h-[3.470px] flex items-center pl-[24px] pr-[3px]"><span class="w-full h-px bg-[#b0b0b0]"></span></div>
    <div class="h-[20.800px] flex items-center pr-[16px]"><svg class="ml-[3px] w-[17px] shrink-0" width="17" height="16" viewBox="0 0 17 16" fill="none" stroke="#555"><path d="M2 2H12V10H2ZM7 2V5H10V2"/><rect x="7.500" y="8.500" width="8" height="6" fill="#bcd8ef" stroke="#2f7fd0"/></svg><span class="ml-[4px] flex-1"><u>E</u>dit Elements by Stories...</span></div>
  </div>

  <!-- Mouse cursor -->
  <svg class="absolute left-[479px] top-[572px]" width="12" height="18" viewBox="0 0 12 18"><path d="M1 1V14L4 11L6.500 16.500L9 15.500L6.500 10.500H11Z" fill="#fff" stroke="#333"/></svg>
</div>
</body>
</html>
